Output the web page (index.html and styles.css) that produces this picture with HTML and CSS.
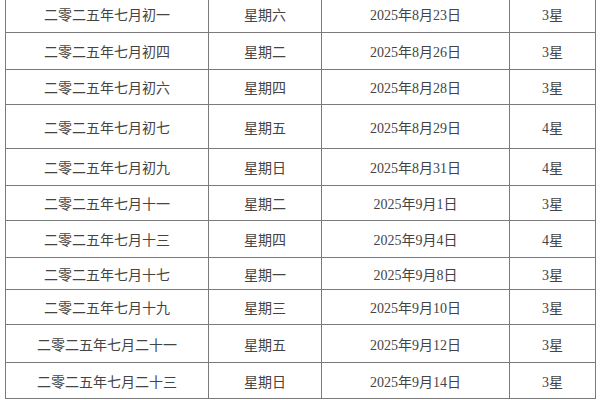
FILE: index.html
```html
<!DOCTYPE html>
<html lang="zh-CN">
<head>
<meta charset="utf-8">
<title>吉日表</title>
<link rel="stylesheet" href="styles.css">
</head>
<body>
<div class="frame">
<table class="days">
<colgroup>
<col class="c1"><col class="c2"><col class="c3"><col class="c4">
</colgroup>
<tbody>
<tr><td>二零二五年七月初一</td><td>星期六</td><td>2025年8月23日</td><td>3星</td></tr>
<tr><td>二零二五年七月初四</td><td>星期二</td><td>2025年8月26日</td><td>3星</td></tr>
<tr><td>二零二五年七月初六</td><td>星期四</td><td>2025年8月28日</td><td>3星</td></tr>
<tr><td>二零二五年七月初七</td><td>星期五</td><td>2025年8月29日</td><td>4星</td></tr>
<tr><td>二零二五年七月初九</td><td>星期日</td><td>2025年8月31日</td><td>4星</td></tr>
<tr><td>二零二五年七月十一</td><td>星期二</td><td>2025年9月1日</td><td>3星</td></tr>
<tr><td>二零二五年七月十三</td><td>星期四</td><td>2025年9月4日</td><td>4星</td></tr>
<tr><td>二零二五年七月十七</td><td>星期一</td><td>2025年9月8日</td><td>3星</td></tr>
<tr><td>二零二五年七月十九</td><td>星期三</td><td>2025年9月10日</td><td>3星</td></tr>
<tr><td>二零二五年七月二十一</td><td>星期五</td><td>2025年9月12日</td><td>3星</td></tr>
<tr><td>二零二五年七月二十三</td><td>星期日</td><td>2025年9月14日</td><td>3星</td></tr>
</tbody>
</table>
</div>
</body>
</html>
```

FILE: styles.css
```css
html, body {
  margin: 0;
  padding: 0;
  background: #ffffff;
}
.frame {
  width: 600px;
  height: 400px;
  overflow: hidden;
  padding-left: 5px;
  box-sizing: border-box;
}
.days {
  margin-top: -6px;
  width: 590px;
  table-layout: fixed;
  border-collapse: collapse;
  font-family: "Liberation Serif", "Noto Sans CJK SC", serif;
  font-size: 14px;
  color: #444444;
}
.c1 { width: 203px; }
.c2 { width: 113px; }
.c3 { width: 188px; }
.c4 { width: 86px; }
.days td {
  border: 1px solid #7a7a7a;
  text-align: center;
  vertical-align: middle;
  padding: 0;
  white-space: nowrap;
}
.days tr:nth-child(1) td { height: 37px; }
.days tr:nth-child(2) td { height: 36px; }
.days tr:nth-child(3) td { height: 34px; }
.days tr:nth-child(4) td { height: 43px; }
.days tr:nth-child(5) td { height: 36px; }
.days tr:nth-child(6) td { height: 34px; }
.days tr:nth-child(7) td { height: 36px; }
.days tr:nth-child(8) td { height: 31px; }
.days tr:nth-child(9) td { height: 34px; }
.days tr:nth-child(10) td { height: 37px; }
.days tr:nth-child(11) td { height: 35px; }
```
